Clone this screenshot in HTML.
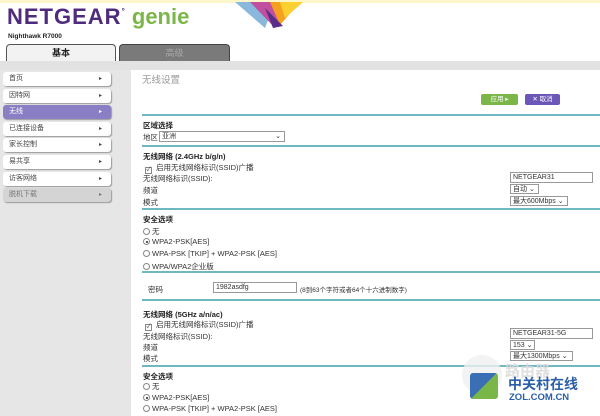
<!DOCTYPE html>
<html><head><meta charset="utf-8"><style>
*{margin:0;padding:0;box-sizing:border-box}
body{width:600px;height:416px;overflow:hidden;background:#fff;font-family:"Liberation Sans","Noto Sans CJK SC",sans-serif;font-size:7.5px;color:#333;position:relative}
.a{position:absolute;white-space:nowrap}
.mi{position:absolute;left:3px;width:108px;height:14px;background:#fff;border-radius:3px;box-shadow:1px 1px 1px #999;font-size:7px;line-height:14px;padding-left:6px;color:#444}
.mi:after{content:"▸";position:absolute;right:9px;font-size:6px}
.ln{position:absolute;left:142px;right:0;height:2px;background:#6fb8c0}
.b{font-weight:bold;color:#222}
.box{position:absolute;border:1px solid #999;background:#fff;font-size:7px;line-height:9px;padding-left:2px;white-space:nowrap;overflow:hidden}
.rd{display:inline-block;width:7px;height:7px;border:1px solid #888;border-radius:50%;vertical-align:-1px;margin-right:2px;position:relative}
.rd.on:after{content:"";position:absolute;left:1.5px;top:1.5px;width:2px;height:2px;border-radius:50%;background:#222}
.ck{display:inline-block;width:7px;height:7px;border:1px solid #888;font-size:6px;line-height:5px;text-align:center;margin-right:4px;vertical-align:-1px}
</style></head><body>
<div class="a" style="left:0;top:0;width:600px;height:3px;background:#fdf6c8"></div>
<svg class="a" style="left:235px;top:0" width="70" height="30"><polygon points="0,2 40,2 30,28" fill="#8ab8dc"/><polygon points="15,2 55,2 40,28" fill="#c04fa0"/><polygon points="35,2 65,2 45,25" fill="#f6a020"/><polygon points="45,2 68,2 50,18" fill="#fcd030"/><polygon points="30,8 48,26 38,28" fill="#5a2d8a"/></svg>
<div class="a" style="left:7px;top:4px;font-size:22px;font-weight:bold;color:#4e2b7c;letter-spacing:1px">NETGEAR<span style="font-size:8px;vertical-align:10px">&#176;</span><span style="color:#7ab648;letter-spacing:0"> genie</span></div>
<div class="a b" style="left:8px;top:33px;font-size:6.5px">Nighthawk R7000</div>
<div class="a" style="left:6px;top:44px;width:110px;height:17px;background:#f2f2f2;border:1px solid #555;border-bottom:none;border-radius:4px 4px 0 0;text-align:center;font-weight:bold;font-size:9px;line-height:16px;color:#222">基本</div>
<div class="a" style="left:119px;top:44px;width:111px;height:17px;background:#7a7a7a;border:1px solid #444;border-bottom:none;border-radius:4px 4px 0 0;text-align:center;font-size:9px;line-height:16px;color:#aaa">高级</div>
<div class="a" style="left:0;top:61px;width:600px;height:9px;background:#e2e2e2"></div>
<div class="a" style="left:0;top:70px;width:131px;height:346px;background:#e6e6e6"></div>
<div class="mi" style="top:72px">首页</div>
<div class="mi" style="top:89px">因特网</div>
<div class="mi" style="top:105px;background:#8a7fc4;color:#fff">无线</div>
<div class="mi" style="top:122px">已连接设备</div>
<div class="mi" style="top:138px">家长控制</div>
<div class="mi" style="top:155px">易共享</div>
<div class="mi" style="top:172px">访客网络</div>
<div class="mi" style="top:188px;background:#d4d4d4;color:#777">脱机下载</div>
<div class="a" style="left:142px;top:72px;font-size:9.5px;color:#999">无线设置</div>
<div class="a" style="left:481px;top:94px;width:37px;height:11px;background:#7ab648;border-radius:2px;color:#fff;font-size:6.5px;line-height:11px;text-align:center">应用 ▸</div>
<div class="a" style="left:525px;top:94px;width:35px;height:11px;background:#6b57b8;border-radius:2px;color:#fff;font-size:6.5px;line-height:11px;text-align:center">✕ 取消</div>
<div class="ln" style="top:114px"></div>
<div class="ln" style="top:145px"></div>
<div class="ln" style="top:208px"></div>
<div class="ln" style="top:271px"></div>
<div class="ln" style="top:299px"></div>
<div class="ln" style="top:365px"></div>
<div class="a b" style="left:143px;top:120px">区域选择</div>
<div class="a" style="left:143px;top:132px">地区</div>
<div class="box" style="left:159px;top:131px;width:126px;height:11px">亚洲<span style="position:absolute;right:3px">⌄</span></div>
<div class="a b" style="left:143px;top:151px">无线网络 (2.4GHz b/g/n)</div>
<div class="a" style="left:145px;top:162px"><span class="ck">✓</span>启用无线网络标识(SSID)广播</div>
<div class="a" style="left:143px;top:173px">无线网络标识(SSID):</div>
<div class="a" style="left:143px;top:185px">频道</div>
<div class="a" style="left:143px;top:197px">模式</div>
<div class="box" style="left:510px;top:172px;width:83px;height:11px">NETGEAR31</div>
<div class="box" style="left:510px;top:184px;width:29px;height:10px">自动 ⌄</div>
<div class="box" style="left:510px;top:196px;width:58px;height:10px">最大600Mbps ⌄</div>
<div class="a b" style="left:143px;top:214px">安全选项</div>
<div class="a" style="left:143px;top:226px"><span class="rd"></span>无</div>
<div class="a" style="left:143px;top:237px"><span class="rd on"></span>WPA2-PSK[AES]</div>
<div class="a" style="left:143px;top:249px"><span class="rd"></span>WPA-PSK [TKIP] + WPA2-PSK [AES]</div>
<div class="a" style="left:143px;top:261px"><span class="rd"></span>WPA/WPA2企业版</div>
<div class="a" style="left:148px;top:284px">密码</div>
<div class="box" style="left:213px;top:282px;width:84px;height:11px">1982asdfg</div>
<div class="a" style="left:300px;top:284px;font-size:6.5px">(8到63个字符或者64个十六进制数字)</div>
<div class="a b" style="left:143px;top:309px">无线网络 (5GHz a/n/ac)</div>
<div class="a" style="left:145px;top:319px"><span class="ck">✓</span>启用无线网络标识(SSID)广播</div>
<div class="a" style="left:143px;top:331px">无线网络标识(SSID):</div>
<div class="a" style="left:143px;top:342px">频道</div>
<div class="a" style="left:143px;top:353px">模式</div>
<div class="box" style="left:510px;top:328px;width:83px;height:11px">NETGEAR31-5G</div>
<div class="box" style="left:510px;top:340px;width:25px;height:10px">153 ⌄</div>
<div class="box" style="left:510px;top:351px;width:63px;height:10px">最大1300Mbps ⌄</div>
<div class="a b" style="left:143px;top:371px">安全选项</div>
<div class="a" style="left:143px;top:381px"><span class="rd"></span>无</div>
<div class="a" style="left:143px;top:393px"><span class="rd on"></span>WPA2-PSK[AES]</div>
<div class="a" style="left:143px;top:404px"><span class="rd"></span>WPA-PSK [TKIP] + WPA2-PSK [AES]</div>
<div class="a" style="left:462px;top:355px;width:40px;height:40px;border-radius:50%;background:rgba(240,240,240,.8)"></div>
<div class="a" style="left:470px;top:373px;width:28px;height:26px;background:linear-gradient(135deg,#3a6fb5 50%,#7ab648 50%);border-radius:3px"></div>
<div class="a" style="left:505px;top:360px;font-size:15px;color:rgba(220,220,220,.9);font-weight:bold">路由器</div>
<div class="a" style="left:508px;top:374px;font-size:14px;color:#2a5ea8;font-weight:bold">中关村在线</div>
<div class="a" style="left:509px;top:392px;font-size:9.5px;color:#2a5ea8;font-weight:bold">ZOL.COM.CN</div>
</body></html>
